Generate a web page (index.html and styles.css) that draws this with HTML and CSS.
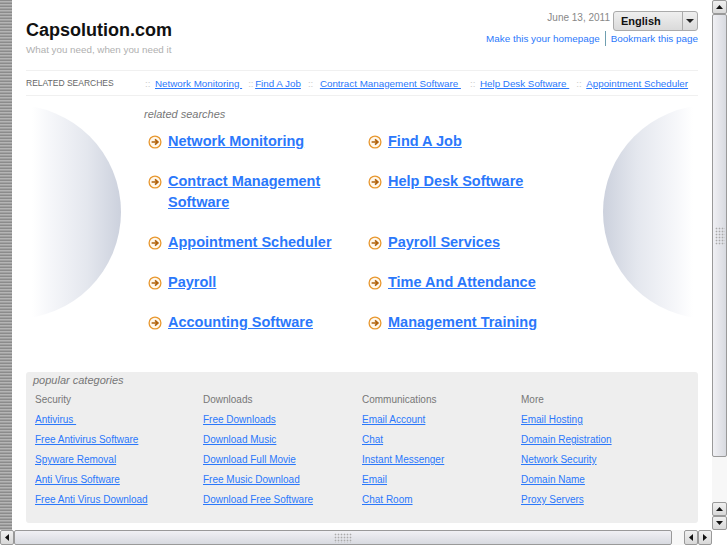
FILE: index.html
```html
<!DOCTYPE html>
<html lang="en">
<head>
<meta charset="utf-8">
<title>Capsolution.com</title>
<link rel="stylesheet" href="styles.css">
</head>
<body>
<div class="window">
  <div class="stripe"></div>
  <main class="page">
    <div class="disc disc-left"></div>
    <div class="disc disc-right"></div>
    <header class="header">
      <div class="brand">
        <h1 class="site-name">Capsolution.com</h1>
        <p class="tagline">What you need, when you need it</p>
      </div>
      <div class="tools">
        <div class="tools-top">
          <span class="date">June 13, 2011</span>
          <div class="lang"><span class="lang-label">English</span><span class="lang-btn"><svg width="8" height="4" viewBox="0 0 8 4"><path d="M0 0h8L4 4z" fill="#222"/></svg></span></div>
        </div>
        <div class="tools-links"><a href="#">Make this your homepage</a><span class="tools-sep"></span><a href="#">Bookmark this page</a></div>
      </div>
    </header>
    <nav class="related-bar">
      <span class="related-label">RELATED SEARCHES</span>
      <span class="related-links">
        <span class="dots d1">::</span><a href="#">Network Monitoring&nbsp;</a>
        <span class="dots d2">::</span><a href="#">Find A Job</a>
        <span class="dots d3">::</span><a href="#">Contract Management Software&nbsp;</a>
        <span class="dots d4">::</span><a href="#">Help Desk Software&nbsp;</a>
        <span class="dots d5">::</span><a href="#">Appointment Scheduler</a>
      </span>
    </nav>
    <section class="results">
      <h2 class="results-title">related searches</h2>
      <ul class="results-grid">
        <li class="result"><svg class="arrow"><use href="#arrow"/></svg><a href="#">Network Monitoring</a></li>
        <li class="result"><svg class="arrow"><use href="#arrow"/></svg><a href="#">Find A Job</a></li>
        <li class="result"><svg class="arrow"><use href="#arrow"/></svg><a href="#">Contract Management Software</a></li>
        <li class="result"><svg class="arrow"><use href="#arrow"/></svg><a href="#">Help Desk Software</a></li>
        <li class="result"><svg class="arrow"><use href="#arrow"/></svg><a href="#">Appointment Scheduler</a></li>
        <li class="result"><svg class="arrow"><use href="#arrow"/></svg><a href="#">Payroll Services</a></li>
        <li class="result"><svg class="arrow"><use href="#arrow"/></svg><a href="#">Payroll</a></li>
        <li class="result"><svg class="arrow"><use href="#arrow"/></svg><a href="#">Time And Attendance</a></li>
        <li class="result"><svg class="arrow"><use href="#arrow"/></svg><a href="#">Accounting Software</a></li>
        <li class="result"><svg class="arrow"><use href="#arrow"/></svg><a href="#">Management Training</a></li>
      </ul>
    </section>
    <section class="popular">
      <h2 class="popular-title">popular categories</h2>
      <div class="popular-cols">
        <ul class="cat">
          <li class="cat-head">Security</li>
          <li><a href="#">Antivirus&nbsp;</a></li>
          <li><a href="#">Free Antivirus Software</a></li>
          <li><a href="#">Spyware Removal</a></li>
          <li><a href="#">Anti Virus Software</a></li>
          <li><a href="#">Free Anti Virus Download</a></li>
        </ul>
        <ul class="cat">
          <li class="cat-head">Downloads</li>
          <li><a href="#">Free Downloads</a></li>
          <li><a href="#">Download Music</a></li>
          <li><a href="#">Download Full Movie</a></li>
          <li><a href="#">Free Music Download</a></li>
          <li><a href="#">Download Free Software</a></li>
        </ul>
        <ul class="cat">
          <li class="cat-head">Communications</li>
          <li><a href="#">Email Account</a></li>
          <li><a href="#">Chat</a></li>
          <li><a href="#">Instant Messenger</a></li>
          <li><a href="#">Email</a></li>
          <li><a href="#">Chat Room</a></li>
        </ul>
        <ul class="cat">
          <li class="cat-head">More</li>
          <li><a href="#">Email Hosting</a></li>
          <li><a href="#">Domain Registration</a></li>
          <li><a href="#">Network Security</a></li>
          <li><a href="#">Domain Name</a></li>
          <li><a href="#">Proxy Servers</a></li>
        </ul>
      </div>
    </section>
  </main>
  <div class="vscroll">
    <div class="sb-btn sb-top"><svg width="7" height="4" viewBox="0 0 7 4"><path d="M0 4h7L3.500 0z" fill="#111"/></svg></div>
    <div class="vthumb"><span class="grip"></span></div>
    <div class="sb-track"></div>
    <div class="sb-btn"><svg width="7" height="4" viewBox="0 0 7 4"><path d="M0 4h7L3.500 0z" fill="#111"/></svg></div>
    <div class="sb-btn"><svg width="7" height="4" viewBox="0 0 7 4"><path d="M0 0h7L3.500 4z" fill="#111"/></svg></div>
  </div>
</div>
<div class="hscroll">
  <div class="sb-btn sb-h"><svg width="4" height="7" viewBox="0 0 4 7"><path d="M4 0v7L0 3.500z" fill="#111"/></svg></div>
  <div class="hthumb"><span class="grip grip-h"></span></div>
  <div class="sb-track"></div>
  <div class="sb-btn sb-h"><svg width="4" height="7" viewBox="0 0 4 7"><path d="M4 0v7L0 3.500z" fill="#111"/></svg></div>
  <div class="sb-btn sb-h"><svg width="4" height="7" viewBox="0 0 4 7"><path d="M0 0v7L4 3.500z" fill="#111"/></svg></div>
  <div class="corner"></div>
</div>
<svg class="defs" width="0" height="0"><defs>
  <symbol id="arrow" viewBox="0 0 14 14">
    <circle cx="7" cy="7" r="5.900" fill="#fff8ec" stroke="#e8972e" stroke-width="1.300"/>
    <path d="M3.600 7H9.500M7 4.300 9.900 7 7 9.700" fill="none" stroke="#b0620c" stroke-width="1.700"/>
  </symbol>
</defs></svg>
</body>
</html>
```
FILE: styles.css
```css
* { box-sizing: border-box; }
html, body { margin: 0; height: 100%; overflow: hidden; }
body {
  display: flex;
  flex-direction: column;
  width: 727px;
  height: 545px;
  background: #fff;
  font-family: "Liberation Sans", Arial, sans-serif;
  color: #666;
}
a { color: #2b78fb; text-decoration: underline; }
ul { list-style: none; margin: 0; padding: 0; }
h1, h2, p { margin: 0; font-weight: normal; }
.defs { position: absolute; }

.window { flex: 1; display: flex; min-height: 0; }
.stripe {
  flex: none;
  width: 12px;
  background: repeating-linear-gradient(#8b8b8b 0 1px, #b4b4b4 1px 2px, #a0a0a0 2px 3px);
}
.page {
  position: relative;
  flex: 1;
  padding: 0 14px;
  min-width: 0;
  overflow: hidden;
}
.disc { position: absolute; top: 105px; width: 214px; height: 214px; border-radius: 50%; }
.disc-left {
  left: -105px;
  background: linear-gradient(90deg, #fff 0 125px, #f6f7fa 142px, #e4e7ee 180px, #ccd1dd 214px);
}
.disc-right {
  left: 591px;
  background: linear-gradient(270deg, #fff 0 124px, #f6f7fa 141px, #e4e7ee 180px, #ccd1dd 214px);
}

.header { position: relative; display: flex; justify-content: space-between; height: 71px; border-bottom: 1px solid #f0f0f0; }
.brand { padding-top: 19px; }
.site-name { font-size: 18px; line-height: 22px; font-weight: bold; color: #111; }
.tagline { margin-top: 2px; font-size: 9.800px; line-height: 13px; color: #b0b0b0; }
.tools { display: flex; flex-direction: column; align-items: flex-end; padding-top: 11px; }
.tools-top { display: flex; align-items: flex-start; gap: 3px; }
.date { font-size: 10px; line-height: 13px; color: #888; }
.lang {
  display: flex; width: 85px; height: 20px;
  border: 1px solid #aaa; border-radius: 3px;
  background: linear-gradient(#efefef, #dadada);
}
.lang-label { flex: 1; padding-left: 7px; font-size: 11px; line-height: 19px; font-weight: bold; color: #111; }
.lang-btn { display: flex; width: 15px; align-items: center; justify-content: center; border-left: 1px solid #aaa; }
.tools-links { display: flex; align-items: center; font-size: 9.900px; line-height: 14px; }
.tools-links a { text-decoration: none; }
.tools-sep { width: 1px; height: 15px; margin: 0 5px; background: #6f9fb0; }

.related-bar {
  position: relative; display: flex; align-items: center; height: 25px;
  border-bottom: 1px solid #f0f0f0; font-size: 9.800px;
}
.related-label { flex: none; width: 119px; font-size: 8.500px; color: #666; }
.related-links { display: flex; white-space: nowrap; }
.dots { color: #ccc; }
.d1 { width: 10px; }
.d2 { width: 7px; margin-left: 6px; }
.d3 { width: 12px; margin-left: 7px; }
.d4 { width: 10px; margin-left: 9px; }
.d5 { width: 10px; margin-left: 7px; }

.results { position: relative; padding: 11px 0 0 118px; }
.results-title { font-size: 11px; line-height: 14px; font-style: italic; color: #777; }
.results-grid { display: grid; grid-template-columns: 220px 220px; row-gap: 19px; margin-top: 10px; }
.result { display: flex; gap: 6px; padding-left: 4px; font-size: 14.500px; line-height: 21px; font-weight: bold; }
.arrow { flex: none; width: 14px; height: 14px; margin-top: 4px; }

.popular {
  position: absolute; left: 14px; top: 372px; width: 672px; height: 151px;
  padding: 2px 9px 0 7px;
  background: #eee; border-radius: 3px;
}
.popular-title { font-size: 11px; line-height: 13px; font-style: italic; color: #777; }
.popular-cols { display: grid; grid-template-columns: 168px 159px 159px 150px; padding: 3px 0 0 2px; }
.cat { font-size: 10px; line-height: 20px; }
.cat-head { color: #777; }

.vscroll { flex: none; display: flex; flex-direction: column; width: 15px; background: #f4f4f4; }
.sb-btn {
  display: flex; align-items: center; justify-content: center;
  flex: none; width: 15px; height: 14px;
  border: 1px solid #999; border-radius: 2px;
  background: linear-gradient(#f0f0f0, #d8d8d8);
}
.sb-h { width: 14px; height: 15px; }
.vthumb, .hthumb { display: flex; align-items: center; justify-content: center; border: 1px solid #999; border-radius: 2px; }
.vthumb { flex: none; height: 443px; background: linear-gradient(90deg, #f0f0f4, #d8dae0); }
.hthumb { flex: 1; background: linear-gradient(#f0f0f4, #d8dae0); }
.sb-track { flex: 1; background: #f7f7f7; }
.grip {
  width: 10px; height: 18px;
  background-image: radial-gradient(#aaa 40%, transparent 50%);
  background-size: 3px 3px;
}
.grip-h { width: 18px; height: 10px; }

.hscroll { flex: none; display: flex; height: 15px; }
.corner { flex: none; width: 15px; }
.hscroll .sb-track { flex: none; width: 12px; }
```
